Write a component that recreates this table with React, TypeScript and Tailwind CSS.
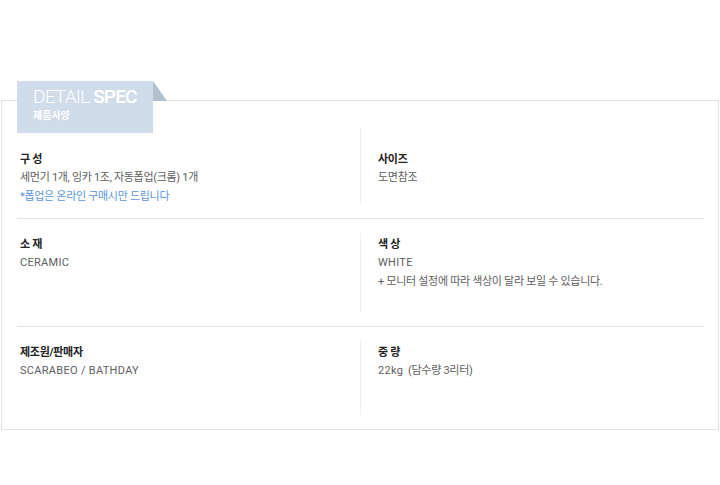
const font = { fontFamily: 'Roboto, "Noto Sans CJK KR", sans-serif' };

type Line = { text: React.ReactNode; latin?: boolean; blue?: boolean };

function Col({ title, lines, right }: { title: string; lines: Line[]; right?: boolean }) {
  return (
    <div className={right ? "flex-1 pl-[17px]" : "w-[343px] pl-[3px]"}>
      <div className="text-[11px] leading-[17px] font-bold text-[#222] tracking-[-0.3px]">{title}</div>
      {lines.map((l, i) => (
        <div
          key={i}
          className={`text-[11px] leading-[19px] ${l.latin ? "tracking-[0.3px]" : "tracking-[-0.3px]"} ${
            l.blue ? "text-[#5b96dc]" : "text-[#5e5e5e]"
          }`}
        >
          {l.text}
        </div>
      ))}
    </div>
  );
}

function Row({
  pad,
  h,
  textTop,
  last,
  left,
  right,
}: {
  pad: string;
  h: string;
  textTop: string;
  last?: boolean;
  left: React.ReactNode;
  right: React.ReactNode;
}) {
  return (
    <div className={`${pad} ${last ? "" : "border-b border-[#e5e5e5]"}`}>
      <div className={`flex ${h}`}>
        <div className={`w-[343px] ${textTop}`}>{left}</div>
        <div className={`flex-1 border-l border-[#eeeeee] ${textTop}`}>{right}</div>
      </div>
    </div>
  );
}

export default function App() {
  return (
    <div className="w-[720px] h-[485px] bg-white pt-[100px]" style={font}>
      <div className="relative ml-[1px] w-[718px] h-[330px] border border-[#e3e3e3]">
        {/* tab */}
        <div className="absolute left-[15px] top-[-20px] flex">
          <div className="w-[136px] h-[52px] bg-[#d1dcea] pl-[16px] pt-[4px]">
            <div className="text-[19px] leading-[24px] text-white tracking-[-0.8px]">
              <span className="font-light">DETAIL</span> <span className="font-medium">SPEC</span>
            </div>
            <div className="text-[10px] leading-[14px] font-bold text-white">제품사양</div>
          </div>
          <svg width="14" height="20" viewBox="0 0 14 20" className="block">
            <polygon points="0,0 14,20 0,20" fill="#b3bfcd" />
          </svg>
        </div>

        <div className="ml-[15px] mr-[14px]">
          <Row
            pad="pt-[26px] pb-[15px]"
            h="h-[76px]"
            textTop="pt-[24px]"
            left={
              <Col
                title="구 성"
                lines={[
                  { text: "세먼기 1개, 잉카 1조, 자동폽업(크롬) 1개" },
                  { text: "*폽업은 온라인 구매시만 드립니다", blue: true },
                ]}
              />
            }
            right={<Col right title="사이즈" lines={[{ text: "도면참조" }]} />}
          />
          <Row
            pad="pt-[14px] pb-[13px]"
            h="h-[80px]"
            textTop="pt-[3px]"
            left={<Col title="소 재" lines={[{ text: "CERAMIC", latin: true }]} />}
            right={
              <Col
                right
                title="색 상"
                lines={[
                  { text: "WHITE", latin: true },
                  { text: "+ 모니터 설정에 따라 색상이 달라 보일 수 있습니다." },
                ]}
              />
            }
          />
          <Row
            pad="pt-[13px]"
            h="h-[75px]"
            textTop="pt-[4px]"
            last
            left={<Col title="제조원/판매자" lines={[{ text: "SCARABEO / BATHDAY", latin: true }]} />}
            right={
              <Col
                right
                title="중 량"
                lines={[
                  {
                    text: (
                      <>
                        <span className="tracking-[0.3px]">22kg</span>&nbsp; (담수량 3리터)
                      </>
                    ),
                  },
                ]}
              />
            }
          />
        </div>
      </div>
    </div>
  );
}
